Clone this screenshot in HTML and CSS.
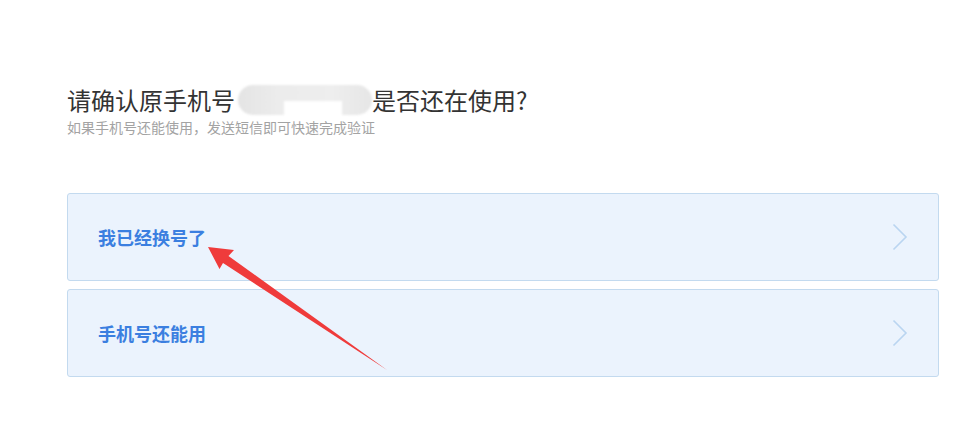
FILE: index.html
```html
<!DOCTYPE html>
<html lang="zh-CN">
<head>
<meta charset="utf-8">
<title>确认原手机号</title>
<link rel="stylesheet" href="styles.css">
</head>
<body>
<main class="page">
  <header class="head">
    <h1 class="title">请确认原手机号<span class="masked"><span class="mask-notch"></span></span>是否还在使用?</h1>
    <p class="subtitle">如果手机号还能使用，发送短信即可快速完成验证</p>
  </header>
  <div class="options">
    <a class="option" href="#">
      <span class="option-label">我已经换号了</span>
      <svg class="chev" width="16" height="28" viewBox="0 0 16 28"><path d="M1.5 1.5 L14 14 L1.5 26.5" fill="none" stroke="#b9d5f1" stroke-width="1.6"/></svg>
    </a>
    <a class="option" href="#">
      <span class="option-label">手机号还能用</span>
      <svg class="chev" width="16" height="28" viewBox="0 0 16 28"><path d="M1.5 1.5 L14 14 L1.5 26.5" fill="none" stroke="#b9d5f1" stroke-width="1.6"/></svg>
    </a>
  </div>
  <svg class="arrow" width="977" height="433" viewBox="0 0 977 433">
    <polygon points="208,247 234,250 228.5,256 387,370 223,263 219.5,269" fill="#ef3b3b"/>
  </svg>
</main>
</body>
</html>
```
FILE: styles.css
```css
html, body {
  margin: 0;
  padding: 0;
  background: #ffffff;
}
body {
  font-family: "Noto Sans CJK SC", "Noto Sans", "Liberation Sans", sans-serif;
}
.page {
  position: relative;
  width: 977px;
  height: 433px;
  padding: 83px 38px 0 67px;
  box-sizing: border-box;
}
.head {
  margin-bottom: 57px;
}
.title {
  margin: 0;
  font-size: 24px;
  line-height: 34px;
  font-weight: 400;
  color: #333333;
  display: flex;
  align-items: center;
}
.masked {
  position: relative;
  display: inline-block;
  width: 134px;
  height: 30px;
  margin: 0 0 0 3px;
  border-radius: 15px;
  background: linear-gradient(90deg, #e4e4e4 0%, #ececec 30%, #eeeeee 70%, #e6e6e6 100%);
  filter: blur(1.2px);
}
.mask-notch {
  position: absolute;
  left: 46px;
  top: 16px;
  width: 58px;
  height: 16px;
  background: #ffffff;
}
.subtitle {
  margin: 1px 0 0;
  font-size: 14px;
  line-height: 18px;
  color: #a3a3a3;
}
.options {
  display: flex;
  flex-direction: column;
  gap: 8px;
}
.option {
  display: flex;
  align-items: center;
  justify-content: space-between;
  height: 88px;
  box-sizing: border-box;
  padding: 0 30px 0 30px;
  background: #ebf3fd;
  border: 1px solid #c3daef;
  border-radius: 3px;
  text-decoration: none;
}
.option-label {
  font-size: 18px;
  font-weight: 700;
  color: #3b7fe0;
}
.chev {
  display: block;
}
.arrow {
  position: absolute;
  left: 0;
  top: 0;
  pointer-events: none;
}
```
